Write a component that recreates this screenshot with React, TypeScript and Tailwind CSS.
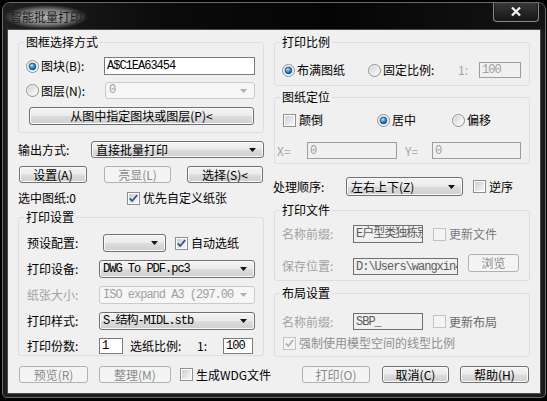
import clsx from "clsx";
import type { ReactNode } from "react";

const BTN_BG = "bg-[linear-gradient(#f3f3f3_0%,#ebebeb_48%,#dcdcdc_52%,#cfcfcf_100%)]";
const MONO = "font-['Liberation_Mono','Noto_Sans_CJK_SC',monospace] tracking-[-1px]";
const OFF = "text-[#a3a3a3]";

function RadioMark({ checked }: { checked?: boolean }) {
  return (
    <svg width="13" height="13" viewBox="0 0 13 13" className="shrink-0">
      <defs>
        <linearGradient id="rb" x1="0" y1="0" x2="1" y2="1">
          <stop offset="0" stopColor="#cfd1d3" />
          <stop offset="1" stopColor="#ffffff" />
        </linearGradient>
        <radialGradient id="rd" cx="0.4" cy="0.35" r="0.75">
          <stop offset="0" stopColor="#b9ecff" />
          <stop offset="0.45" stopColor="#2f8fd8" />
          <stop offset="1" stopColor="#0c3c74" />
        </radialGradient>
      </defs>
      <circle cx="6.5" cy="6.5" r="6" fill="#f4f4f4" stroke="#8e8f8f" />
      <circle cx="6.5" cy="6.5" r="4.5" fill="url(#rb)" />
      {checked && <circle cx="6.5" cy="6.5" r="3.4" fill="url(#rd)" stroke="#18406e" strokeWidth="0.6" />}
    </svg>
  );
}

function CheckMark({ checked, disabled }: { checked?: boolean; disabled?: boolean }) {
  return (
    <svg width="13" height="13" viewBox="0 0 13 13" className="shrink-0">
      <defs>
        <linearGradient id="cb" x1="0" y1="0" x2="1" y2="1">
          <stop offset="0" stopColor="#cbcfd5" />
          <stop offset="1" stopColor="#f7f7f7" />
        </linearGradient>
      </defs>
      <rect x="0.5" y="0.5" width="12" height="12" fill={disabled ? "#f4f4f4" : "#fdfdfd"} stroke={disabled ? "#c2c2c2" : "#8e8f8f"} />
      {!disabled && <rect x="2" y="2" width="9" height="9" fill="url(#cb)" />}
      {checked && (
        <path d="M2.8 6.4 L5.2 9 L10.2 3" fill="none" stroke={disabled ? "#b0b0b0" : "#35509a"} strokeWidth="1.8" />
      )}
    </svg>
  );
}

function Radio({ checked, label, className }: { checked?: boolean; label: string; className?: string }) {
  return (
    <div className={clsx("flex items-center", className)}>
      <RadioMark checked={checked} />
      <span className="ml-[2px] whitespace-nowrap">{label}</span>
    </div>
  );
}

function Check({
  checked,
  disabled,
  label,
  className,
  labelClass,
}: {
  checked?: boolean;
  disabled?: boolean;
  label: string;
  className?: string;
  labelClass?: string;
}) {
  return (
    <div className={clsx("flex items-center", className)}>
      <CheckMark checked={checked} disabled={disabled} />
      <span className={clsx("ml-[3px] whitespace-nowrap", labelClass)}>{label}</span>
    </div>
  );
}

function Btn({ children, disabled, className }: { children: ReactNode; disabled?: boolean; className: string }) {
  return (
    <div
      className={clsx(
        "flex shrink-0 items-center justify-center rounded-[3px] border whitespace-nowrap",
        disabled
          ? "border-[#adb2b5] bg-[#f4f4f4] text-[#8a8a8a]"
          : clsx("border-[#707070] text-black shadow-[inset_0_0_0_1px_#fbfbfb]", BTN_BG),
        className,
      )}
    >
      {children}
    </div>
  );
}

function Combo({
  value,
  disabled,
  mono,
  className,
}: {
  value: string;
  disabled?: boolean;
  mono?: boolean;
  className: string;
}) {
  return (
    <div
      className={clsx(
        "flex shrink-0 items-center rounded-[3px] border pr-[7px]",
        mono ? "pl-[3px]" : "pl-[4px]",
        disabled
          ? "border-[#cacaca] bg-[#f6f6f6] text-[#a0a0a0]"
          : clsx("border-[#707070] text-black shadow-[inset_0_0_0_1px_#fbfbfb]", BTN_BG),
        className,
      )}
    >
      <span className={clsx("min-w-0 flex-1 overflow-hidden whitespace-nowrap leading-[15px]", mono && MONO)}>{value}</span>
      <svg width="7" height="4" viewBox="0 0 7 4" className="ml-[3px] shrink-0">
        <path d="M0 0H7L3.5 4Z" fill={disabled ? "#b0b0b0" : "#111"} />
      </svg>
    </div>
  );
}

function Field({ value, tone = "on", className }: { value: string; tone?: "on" | "off" | "ro"; className: string }) {
  return (
    <div
      className={clsx(
        "flex shrink-0 items-center overflow-hidden whitespace-nowrap border pl-[2px]",
        MONO,
        tone === "on" && "border-[#7a7a7a] bg-white text-black",
        tone === "off" && "border-[#9d9d9d] bg-[#f0f0f0] text-[#a0a0a0]",
        tone === "ro" && "border-[#6f6f6f] bg-[#f0f0f0] text-[#5c5c5c]",
        className,
      )}
    >
      {value}
    </div>
  );
}

function Group({ title, className, children }: { title: string; className?: string; children: ReactNode }) {
  return (
    <fieldset className={clsx("rounded-[3px] border border-[#d5dfe5]", className)}>
      <legend className="ml-[5px] px-[2px] leading-[14px]">{title}</legend>
      {children}
    </fieldset>
  );
}

function TitleBar() {
  return (
    <div className="flex h-[27px] shrink-0 items-start bg-[linear-gradient(90deg,#202020_0%,#0b0b0b_30%,#050505_60%,#141414_100%)] pl-[1px] pr-[6px]">
      <span className="self-center bg-[radial-gradient(closest-side,rgba(190,190,190,0.95)_0%,rgba(160,160,160,0.75)_60%,rgba(120,120,120,0)_100%)] px-[6px] py-[5px] text-[#202020]">
        智能批量打印
      </span>
      <div className="-mt-[1px] ml-auto flex h-[20px] w-[46px] items-center justify-center rounded-b-[4px] border border-t-0 border-[#8a8a8a] bg-[linear-gradient(#3a3a3a,#151515)] shadow-[inset_0_0_0_1px_#1a1a1a]">
        <svg width="12" height="11" viewBox="0 0 12 11">
          <path d="M2 1.5 L10 9.5 M10 1.5 L2 9.5" stroke="#222" strokeWidth="3.6" />
          <path d="M2 1.5 L10 9.5 M10 1.5 L2 9.5" stroke="#f4f4f4" strokeWidth="2.4" />
        </svg>
      </div>
    </div>
  );
}

function LeftColumn() {
  return (
    <div className="ml-[10px] flex w-[246px] shrink-0 flex-col pt-[5px]">
      <Group title="图框选择方式" className="pb-[7px]">
        <div className="mt-[8px] flex h-[18px] items-center pl-[7px]">
          <RadioMark checked />
          <span className="ml-[2px] w-[63px]">图块(B):</span>
          <Field value="A$C1EA63454" className="h-[18px] w-[151px]" />
        </div>
        <div className="mt-[7px] flex h-[17px] items-center pl-[7px]">
          <RadioMark />
          <span className="ml-[2px] w-[64px]">图层(N):</span>
          <Combo value="0" disabled mono className="h-[17px] w-[150px]" />
        </div>
        <Btn className="mt-[8px] ml-[10px] h-[18px] w-[225px]">从图中指定图块或图层(P)&lt;</Btn>
      </Group>

      <div className="mt-[8px] flex h-[17px] items-center">
        <span className="w-[73px]">输出方式:</span>
        <Combo value="直接批量打印" className="h-[17px] w-[173px]" />
      </div>

      <div className="mt-[8px] flex h-[17px] items-center">
        <Btn className="ml-[1px] h-[17px] w-[68px]">设置(A)</Btn>
        <Btn disabled className="ml-[17px] h-[17px] w-[67px]">亮显(L)</Btn>
        <Btn className="ml-[16px] h-[17px] w-[76px]">选择(S)&lt;</Btn>
      </div>

      <div className="mt-[8px] flex h-[14px] items-center">
        <span className="w-[109px]">选中图纸:0</span>
        <Check checked label="优先自定义纸张" />
      </div>

      <Group title="打印设置" className="mt-[5px] pb-[1px]">
        <div className="mt-[10px] flex h-[18px] items-center pl-[8px]">
          <span className="w-[76px]">预设配置:</span>
          <Combo value="" className="h-[18px] w-[63px]" />
          <Check checked label="自动选纸" className="ml-[9px]" />
        </div>
        <div className="mt-[8px] flex h-[18px] items-center pl-[8px]">
          <span className="w-[72px]">打印设备:</span>
          <Combo value="DWG To PDF.pc3" mono className="h-[18px] w-[156px]" />
        </div>
        <div className="mt-[8px] flex h-[18px] items-center pl-[8px]">
          <span className={clsx("w-[72px]", OFF)}>纸张大小:</span>
          <Combo value="ISO expand A3 (297.00 x 420.00 毫米)" disabled mono className="h-[18px] w-[156px]" />
        </div>
        <div className="mt-[8px] flex h-[18px] items-center pl-[8px]">
          <span className="w-[72px]">打印样式:</span>
          <Combo value="S-结构-MIDL.stb" mono className="h-[18px] w-[156px]" />
        </div>
        <div className="mt-[8px] flex h-[16px] items-center pl-[8px]">
          <span className="w-[72px]">打印份数:</span>
          <Field value="1" className="h-[16px] w-[24px]" />
          <span className="ml-[7px] w-[67px]">选纸比例:</span>
          <span className="w-[26px]">1:</span>
          <Field value="100" className="h-[16px] w-[30px]" />
        </div>
      </Group>

      <div className="mt-[10px] flex h-[17px] items-center">
        <Btn disabled className="ml-[1px] h-[17px] w-[69px]">预览(R)</Btn>
        <Btn disabled className="ml-[11px] h-[17px] w-[72px]">整理(M)</Btn>
        <Check label="生成WDG文件" className="ml-[9px]" />
      </div>
    </div>
  );
}

function RightColumn() {
  return (
    <div className="ml-[10px] flex w-[256px] shrink-0 flex-col pt-[5px]">
      <Group title="打印比例" className="pb-[7px]">
        <div className="mt-[13px] flex h-[16px] items-center pl-[7px]">
          <Radio checked label="布满图纸" className="w-[86px]" />
          <Radio label="固定比例:" className="w-[90px]" />
          <span className={clsx("w-[21px]", OFF)}>1:</span>
          <Field value="100" tone="off" className="h-[16px] w-[42px]" />
        </div>
      </Group>

      <Group title="图纸定位" className="mt-[4px] pb-[4px]">
        <div className="mt-[9px] flex h-[14px] items-center pl-[8px]">
          <Check label="颠倒" className="w-[94px]" />
          <Radio checked label="居中" className="w-[75px]" />
          <Radio label="偏移" />
        </div>
        <div className="mt-[15px] flex h-[17px] items-center pl-[2px]">
          <span className={clsx("w-[30px]", OFF)}>X=</span>
          <Field value="0" tone="off" className="h-[17px] w-[90px]" />
          <span className={clsx("ml-[8px] w-[27px]", OFF)}>Y=</span>
          <Field value="0" tone="off" className="h-[17px] w-[89px]" />
        </div>
      </Group>

      <div className="mt-[13px] -ml-[1px] flex h-[19px] items-center">
        <span className="w-[73px]">处理顺序:</span>
        <Combo value="左右上下(Z)" className="h-[19px] w-[117px]" />
        <Check label="逆序" className="ml-[10px]" />
      </div>

      <Group title="打印文件" className="mt-[7px] pb-[4px]">
        <div className="mt-[8px] flex h-[18px] items-center pl-[7px]">
          <span className={clsx("w-[71px]", OFF)}>名称前缀:</span>
          <Field value="E户型类独栋别墅" tone="ro" className="h-[18px] w-[70px]" />
          <Check disabled label="更新文件" labelClass="text-[#7a7a7a]" className="ml-[10px]" />
        </div>
        <div className="mt-[11px] flex h-[22px] items-start pl-[7px]">
          <span className={clsx("mt-[5px] w-[71px]", OFF)}>保存位置:</span>
          <Field value="D:\Users\wangxin4\Documents" tone="ro" className="mt-[4px] h-[17px] w-[105px]" />
          <Btn disabled className="ml-[10px] h-[18px] w-[51px]">浏览</Btn>
        </div>
      </Group>

      <Group title="布局设置" className="mt-[5px] pb-[6px]">
        <div className="mt-[13px] flex h-[17px] items-center pl-[7px]">
          <span className={clsx("w-[71px]", OFF)}>名称前缀:</span>
          <Field value="SBP_" tone="ro" className="h-[17px] w-[70px]" />
          <Check disabled label="更新布局" labelClass="text-[#6a6a6a]" className="ml-[10px]" />
        </div>
        <div className="mt-[6px] flex h-[14px] items-center pl-[8px]">
          <Check checked disabled label="强制使用模型空间的线型比例" labelClass="ml-[1px] text-[#8f8f8f]" />
        </div>
      </Group>

      <div className="mt-[9px] flex h-[17px] items-center">
        <Btn disabled className="ml-[28px] h-[17px] w-[68px]">打印(O)</Btn>
        <Btn className="ml-[12px] h-[17px] w-[67px]">取消(C)</Btn>
        <Btn className="ml-[11px] h-[17px] w-[69px]">帮助(H)</Btn>
      </div>
    </div>
  );
}

export default function App() {
  return (
    <div className="h-[401px] w-[547px] overflow-hidden bg-black pt-[2px] pl-[2px] font-['Noto_Sans_CJK_SC',sans-serif] text-[12px] leading-[14px] text-black">
      <div className="flex h-[396px] w-[544px] flex-col overflow-hidden rounded-t-[8px] rounded-b-[5px] border border-[#6a6a6a] bg-[#1c1c1c]">
        <TitleBar />
        <div className="mx-[5px] flex h-[363px] shrink-0 bg-[#f0f0f0] shadow-[0_0_0_1px_#4a4a4a]">
          <LeftColumn />
          <RightColumn />
        </div>
      </div>
    </div>
  );
}
